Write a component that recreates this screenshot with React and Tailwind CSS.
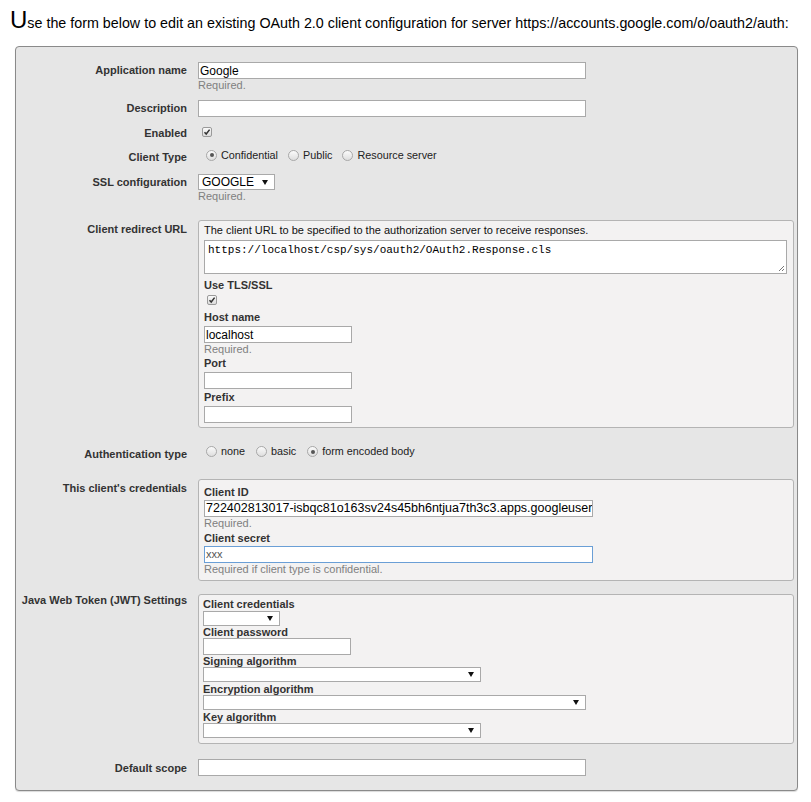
import React from 'react';

const font = "font-['Liberation_Sans',Arial,sans-serif]";

function Row({ label, labelClass = '', className = '', children }) {
  return (
    <div className={`flex ${className}`}>
      <div className={`w-[171px] shrink-0 text-right font-bold text-[11px] text-[#333] ${labelClass}`}>{label}</div>
      <div className="ml-[11px] flex-1 min-w-0">{children}</div>
    </div>
  );
}

function Check() {
  return (
    <span className="inline-flex w-[10px] h-[10px] items-center justify-center border border-[#9a9a9a] rounded-[2px] bg-gradient-to-b from-[#fafafa] to-[#dcdcdc]">
      <svg width="8" height="8" viewBox="0 0 8 8">
        <path d="M1.5 4.2 L3.2 6 L6.6 1.6" fill="none" stroke="#333" strokeWidth="1.5" />
      </svg>
    </span>
  );
}

function Radio({ checked, label }) {
  return (
    <span className="inline-flex items-center">
      <span className="w-[11px] h-[11px] rounded-full border border-[#a8a8a8] bg-gradient-to-b from-[#fbfbfb] to-[#dedede] flex items-center justify-center">
        {checked && <span className="w-[4px] h-[4px] rounded-full bg-[#555]" />}
      </span>
      <span className="ml-[4px] text-[10.8px] text-[#222]">{label}</span>
    </span>
  );
}

function Input({ value = '', w, className = '', textClass = 'text-[12px] text-black' }) {
  return (
    <div className={`h-[17px] border border-[#a9a9a9] bg-white flex items-center pl-[1px] overflow-hidden whitespace-nowrap ${w} ${className}`}>
      <span className={textClass}>{value}</span>
    </div>
  );
}

function Select({ value = '', w, h = 'h-[15px]' }) {
  return (
    <div className={`${h} ${w} border border-[#a9a9a9] bg-white flex items-center justify-between pl-[3px] pr-[6px]`}>
      <span className="text-[12px] text-black">{value}</span>
      <svg width="6" height="5" viewBox="0 0 6 5"><path d="M0 0 H6 L3 5 Z" fill="#111" /></svg>
    </div>
  );
}

function Required({ children = 'Required.' }) {
  return <div className="text-[11px] leading-[12px] text-[#808080]">{children}</div>;
}

function SubLabel({ children, className = '' }) {
  return <div className={`font-bold text-[11px] text-[#333] ${className}`}>{children}</div>;
}

export default function App() {
  return (
    <div className={`${font} bg-white w-[811px] h-[802px] overflow-hidden`}>
      <div className="pt-[8px] pl-[10px]">
        <div className="h-[24px] text-[14.3px] text-black leading-[24px] whitespace-nowrap">
          <span className="text-[24px]">U</span>se the form below to edit an existing OAuth 2.0 client configuration for server https://accounts.google.com/o/oauth2/auth:
        </div>
      </div>

      <div className="ml-[15px] mt-[14px] w-[783px] border border-[#8a8a8a] rounded-[4px] bg-[#e6e6e6] pt-[15px] pb-[13px] shadow-[0_1px_1px_rgba(0,0,0,0.15)]">
        <Row label="Application name" labelClass="leading-[17px]">
          <Input value="Google" w="w-[388px]" />
          <Required />
        </Row>

        <Row label="Description" labelClass="leading-[17px]" className="mt-[9px]">
          <Input w="w-[388px]" />
        </Row>

        <Row label="Enabled" labelClass="leading-[17px] pt-[1px] h-[17px]" className="mt-[7px]">
          <div className="h-[17px] flex items-center pl-[4px] pb-[2px]"><Check /></div>
        </Row>

        <Row label="Client Type" labelClass="leading-[17px] pt-[1px] h-[17px]" className="mt-[7px]">
          <div className="h-[17px] flex items-center pl-[8px] pb-[3px] gap-[10px]">
            <Radio checked label="Confidential" />
            <Radio label="Public" />
            <Radio label="Resource server" />
          </div>
        </Row>

        <Row label="SSL configuration" labelClass="leading-[16px]" className="mt-[9px]">
          <Select value="GOOGLE" w="w-[77px]" h="h-[16px]" />
          <Required />
        </Row>

        <Row label="Client redirect URL" labelClass="leading-[17px] pt-[1px]" className="mt-[18px]">
          <div className="w-[596px] border border-[#b4b4b4] rounded-[3px] bg-[#f3f2f2] pl-[5px] pr-[6px] pb-[4px]">
            <div className="text-[11px] leading-[17px] pt-[1px] text-[#111]">The client URL to be specified to the authorization server to receive responses.</div>
            <div className="mt-[1px] h-[34px] border border-[#a9a9a9] bg-white relative pl-[3px] pt-[3px] flex flex-col">
              <div className="font-['Liberation_Mono',monospace] text-[11px] leading-[13px] text-black">https://localhost/csp/sys/oauth2/OAuth2.Response.cls</div>
              <svg className="absolute right-[1px] bottom-[1px]" width="7" height="7" viewBox="0 0 7 7">
                <path d="M6 1 L1 6 M6 4 L4 6" stroke="#777" strokeWidth="1" />
              </svg>
            </div>
            <SubLabel className="leading-[15px] mt-[4px]">Use TLS/SSL</SubLabel>
            <div className="h-[13px] flex items-center pl-[3px]"><Check /></div>
            <SubLabel className="leading-[15px] mt-[4px]">Host name</SubLabel>
            <Input value="localhost" w="w-[148px]" className="mt-[1px]" />
            <Required />
            <SubLabel className="leading-[15px] mt-[1px]">Port</SubLabel>
            <Input w="w-[148px]" className="mt-[1px]" />
            <SubLabel className="leading-[15px] mt-[1px]">Prefix</SubLabel>
            <Input w="w-[148px]" className="mt-[1px]" />
          </div>
        </Row>

        <Row label="Authentication type" labelClass="leading-[17px] pt-[1px] h-[17px]" className="mt-[17px]">
          <div className="h-[17px] flex items-center pl-[8px] pb-[4px] gap-[11px]">
            <Radio label="none" />
            <Radio label="basic" />
            <Radio checked label="form encoded body" />
          </div>
        </Row>

        <Row label="This client's credentials" labelClass="leading-[17px] pt-[1px]" className="mt-[17px]">
          <div className="w-[596px] border border-[#b4b4b4] rounded-[3px] bg-[#f3f2f2] pl-[5px] pt-[6px] pb-[5px]">
            <SubLabel className="leading-[13px]">Client ID</SubLabel>
            <Input value="722402813017-isbqc81o163sv24s45bh6ntjua7th3c3.apps.googleuser" w="w-[389px]" className="mt-[1px]" textClass="text-[12.5px] text-black" />
            <Required />
            <SubLabel className="leading-[14px] mt-[2px]">Client secret</SubLabel>
            <Input value="xxx" w="w-[389px]" className="mt-[1px] !border-[#6a9fd6]" textClass="text-[11px] text-[#555]" />
            <Required>Required if client type is confidential.</Required>
          </div>
        </Row>

        <Row label="Java Web Token (JWT) Settings" labelClass="leading-[11px] pt-[1px]" className="mt-[13px]">
          <div className="w-[596px] border border-[#b4b4b4] rounded-[3px] bg-[#f3f2f2] pl-[4px] pt-[3px] pb-[5px]">
            <SubLabel className="leading-[13px]">Client credentials</SubLabel>
            <Select w="w-[77px]" />
            <SubLabel className="leading-[12px]">Client password</SubLabel>
            <Input w="w-[148px]" />
            <SubLabel className="leading-[12px]">Signing algorithm</SubLabel>
            <Select w="w-[278px]" />
            <SubLabel className="leading-[12px] mt-[1px]">Encryption algorithm</SubLabel>
            <Select w="w-[383px]" />
            <SubLabel className="leading-[12px] mt-[1px]">Key algorithm</SubLabel>
            <Select w="w-[278px]" />
          </div>
        </Row>

        <Row label="Default scope" labelClass="leading-[17px] pt-[1px]" className="mt-[15px]">
          <Input w="w-[388px]" />
        </Row>
      </div>
    </div>
  );
}
